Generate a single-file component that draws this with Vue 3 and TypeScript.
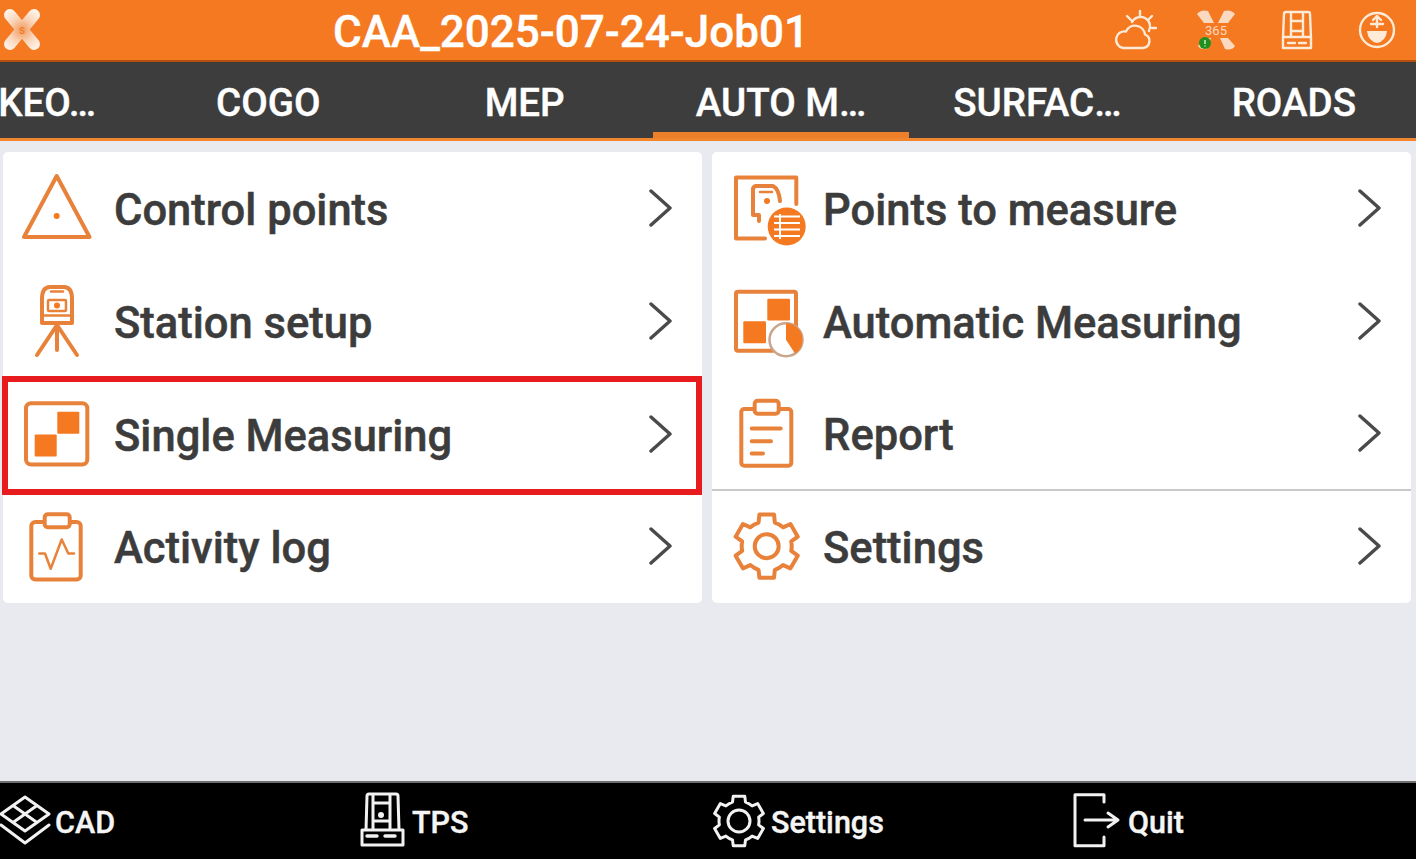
<script setup lang="ts">
const tabs = ['STAKEO…', 'COGO', 'MEP', 'AUTO M…', 'SURFAC…', 'ROADS']
const activeTab = 'AUTO M…'

const leftRows = [
  { label: 'Control points', icon: 'triangle' },
  { label: 'Station setup', icon: 'station' },
  { label: 'Single Measuring', icon: 'single', marked: true },
  { label: 'Activity log', icon: 'activity' },
]

const rightRows = [
  { label: 'Points to measure', icon: 'points' },
  { label: 'Automatic Measuring', icon: 'auto' },
  { label: 'Report', icon: 'report', divided: true },
  { label: 'Settings', icon: 'gear' },
]

const footerItems = [
  { label: 'CAD', icon: 'cad', width: 55 },
  { label: 'TPS', icon: 'tps', width: 58 },
  { label: 'Settings', icon: 'gear', width: 63 },
  { label: 'Quit', icon: 'quit', width: 66 },
]

// six teeth, one pointing straight up
function gearPath(cx: number, cy: number, ro: number, ri: number) {
  const pt = (r: number, deg: number) => {
    const a = (deg * Math.PI) / 180
    return `${(cx + r * Math.cos(a)).toFixed(2)} ${(cy + r * Math.sin(a)).toFixed(2)}`
  }
  let d = ''
  for (let i = 0; i < 6; i++) {
    const c = -90 + i * 60
    d += `${i === 0 ? 'M' : `A${ri} ${ri} 0 0 1`}${pt(ri, c - 19)} L${pt(ro, c - 13)} L${pt(ro, c + 13)} L${pt(ri, c + 19)} `
  }
  return d + `A${ri} ${ri} 0 0 1 ${pt(ri, -109)} Z`
}
</script>

<template>
  <div class="app">
    <header class="title-bar">
      <svg class="logo" width="46" height="60" viewBox="0 0 46 60">
        <defs>
          <radialGradient id="petal" gradientUnits="userSpaceOnUse" cx="22" cy="30" r="24">
            <stop offset="0" stop-color="#f09a5e" />
            <stop offset="0.55" stop-color="#fbd7bd" />
            <stop offset="1" stop-color="#fff4ea" />
          </radialGradient>
        </defs>
        <path class="petals" d="M10 15 L34 44 M34 15 L10 44" />
        <text x="22" y="34" class="logo-s">s</text>
      </svg>
      <h1 class="job-title">CAA_2025-07-24-Job01</h1>
      <div class="status-icons">
        <svg width="80" height="60" viewBox="0 0 80 60" class="status-line">
          <path d="M27 48 H47 A7 7 0 0 0 49 34.5 A10 10 0 0 0 30 31.5 A8.2 8.2 0 0 0 27 48 Z" />
          <path d="M36 22 A9.5 9.5 0 0 1 53 31 M44 11 V17 M31 16 L35 20 M56 16 L52 20 M56 28 H60" />
        </svg>
        <svg width="80" height="60" viewBox="0 0 80 60">
          <path class="x-petal" d="M21 14 Q25 9 32 11 L38 23 H28 Z M59 14 Q55 9 48 11 L42 23 H52 Z M59 46 Q56 51 49 49 L44 38 H52 Z M28 38 H35 L31 49 Q25 50 22 46 Z" />
          <text x="40" y="35" class="x-number">365</text>
          <circle cx="29" cy="43" r="6" fill="#1f8f1f" />
          <path d="M29 40 V44 M29 45.5 V46.5" stroke="#d8f3d0" stroke-width="1.4" />
        </svg>
        <svg width="80" height="60" viewBox="0 0 80 60" class="status-line">
          <path d="M27 48 V38 L28 14 Q28 12 30 12 H52 Q54 12 54 14 L55 38 V48 Z M27 37 H55" />
          <path d="M35 13 V37 M47 13 V37 M35 21 H47 M35 31 H47" />
          <path d="M32 43 H39 M43 43 H50" />
        </svg>
        <svg width="80" height="60" viewBox="0 0 80 60" class="status-line">
          <circle cx="41" cy="30" r="17" />
          <path d="M41 17 V27 M37 20 L41 16 L45 20 M35 24 H47" />
          <path class="status-fill" d="M31 31 H51 Q50 41 41 43 Q32 41 31 31 Z" />
        </svg>
      </div>
    </header>

    <nav class="tab-bar">
      <div class="tab-strip">
        <div v-for="tab in tabs" :key="tab" class="tab" :class="{ active: tab === activeTab }">{{ tab }}</div>
      </div>
    </nav>

    <main class="menu-area">
      <section class="card">
        <div v-for="row in leftRows" :key="row.label" class="row">
          <svg class="row-icon" width="80" height="80" viewBox="0 0 80 80">
            <template v-if="row.icon === 'triangle'">
              <path d="M39.7 7 L72.5 68 H7 Z" />
              <circle class="solid" cx="39.7" cy="47" r="3" />
            </template>
            <template v-else-if="row.icon === 'station'">
              <path d="M25 41 V17 Q25 5 33 5 H47 Q55 5 55 17 V41 Z" fill="#fff" />
              <rect x="31" y="18" width="18" height="11" rx="1" stroke-width="2.5" />
              <circle class="solid" cx="40" cy="23.5" r="3" />
              <path d="M25 33.5 H55 M34 9.5 H46" stroke-width="2.5" />
              <path d="M40 43 L20 73 M40 43 L60 73 M40 43 V68" />
            </template>
            <template v-else-if="row.icon === 'single'">
              <rect x="9" y="8.2" width="61.3" height="61.3" rx="5" />
              <rect class="solid" x="40.3" y="16.8" width="22" height="22" rx="1" />
              <rect class="solid" x="17.7" y="39.5" width="22" height="22" rx="1" />
            </template>
            <template v-else>
              <rect x="14.3" y="15" width="49.4" height="57.5" rx="4" />
              <rect class="clip" x="27.7" y="7.2" width="25" height="13" rx="3" />
              <path d="M22.3 46.5 H28 L33.7 61.8 L44.7 32.5 L51.3 46.5 H57" stroke-width="2.5" />
            </template>
          </svg>
          <span class="row-label">{{ row.label }}</span>
          <svg class="chevron" width="24" height="38" viewBox="0 0 24 38">
            <path d="M2 2 L21 19 L2 36" />
          </svg>
          <div v-if="row.marked" class="red-mark"></div>
        </div>
      </section>

      <section class="card">
        <div v-for="row in rightRows" :key="row.label" class="row" :class="{ divided: row.divided }">
          <svg class="row-icon" width="80" height="80" viewBox="0 0 80 80">
            <template v-if="row.icon === 'points'">
              <path d="M70.3 35 V8.5 H10 V69.5 H39" />
              <path d="M27 46 V20 Q27 18 30 17 H47 Q53 20 54 32 M27 46 H33 L33 52" />
              <path d="M34 23 H46" stroke-width="2.5" />
              <circle class="solid" cx="41" cy="32" r="3" />
              <circle class="solid" cx="60.7" cy="57.5" r="19" />
              <path class="table-lines" d="M48 47.5 H74 M48 54 H74 M48 60.5 H74 M48 67 H74 M54 45 V70" />
            </template>
            <template v-else-if="row.icon === 'auto'">
              <rect x="10" y="9.8" width="60" height="59" rx="2" />
              <rect class="solid" x="41.3" y="16.8" width="22.7" height="21.7" rx="1" />
              <rect class="solid" x="17.3" y="39.2" width="22.7" height="22" rx="1" />
              <circle class="pie-face" cx="60" cy="57.8" r="16.5" />
              <path class="solid" d="M60 41.3 A16.5 16.5 0 0 1 69 71.6 L60 57.8 Z" />
            </template>
            <template v-else-if="row.icon === 'report'">
              <rect x="15.3" y="15" width="50" height="56.8" rx="3" />
              <rect class="clip" x="28.7" y="6.8" width="24" height="13" rx="3" />
              <path d="M25.7 34.5 H54.7 M25.7 47.2 H45 M25.7 59.5 H37" />
            </template>
            <template v-else>
              <path :d="gearPath(40.7, 39.2, 32.5, 25)" />
              <circle cx="40.7" cy="39.2" r="12" />
            </template>
          </svg>
          <span class="row-label">{{ row.label }}</span>
          <svg class="chevron" width="24" height="38" viewBox="0 0 24 38">
            <path d="M2 2 L21 19 L2 36" />
          </svg>
        </div>
      </section>
    </main>

    <footer class="bottom-bar">
      <div v-for="item in footerItems" :key="item.label" class="bottom-item">
        <svg class="bottom-icon" :width="item.width" height="62" :viewBox="`0 0 ${item.width} 62`">
          <template v-if="item.icon === 'cad'">
            <path d="M25 7 L49 24 L25 41 L1 24 Z M13 15.5 L37 32.5 M37 15.5 L13 32.5" />
            <path d="M1 35 L25 53 L49 35" />
          </template>
          <template v-else-if="item.icon === 'tps'">
            <path d="M8 55 V40 H49 V55 Z M12 40 L13 6 Q13 4 15 4 H42 Q44 4 44 6 L45 40" />
            <path d="M19 5 V39 M36 5 V39 M19 13 H36 M19 31 H36" />
            <circle class="solid" cx="27" cy="25" r="3" />
            <path d="M13 46 H23 M31 46 H41" stroke-width="3.4" />
          </template>
          <template v-else-if="item.icon === 'gear'">
            <path :d="gearPath(31, 31, 25.5, 20)" />
            <circle cx="31" cy="31" r="11" />
          </template>
          <template v-else>
            <path d="M42 12 V4.7 H13 V55.7 H42 V47" />
            <path d="M23 30 H56 M46 23 L56 30 L46 37" />
          </template>
        </svg>
        <span class="bottom-label">{{ item.label }}</span>
      </div>
    </footer>
  </div>
</template>

<style scoped>
.app {
  display: flex;
  flex-direction: column;
  height: 100vh;
  overflow: hidden;
  background: #e9eaef;
  font-family: Roboto, "Liberation Sans", sans-serif;
}

.title-bar {
  display: flex;
  align-items: center;
  height: 60px;
  background: #f47920;
  border-bottom: 2px solid #b5500c;
  flex-shrink: 0;
}

.petals {
  fill: none;
  stroke: url(#petal);
  stroke-width: 12;
  stroke-linecap: round;
}

.logo-s {
  font-size: 12px;
  fill: #f47920;
  text-anchor: middle;
}

.job-title {
  flex: 1;
  margin: 0;
  padding-top: 3px;
  color: #fff;
  font-size: 44px;
  font-weight: 500;
  line-height: 1;
  text-align: center;
  -webkit-text-stroke: 0.4px #fff;
}

.status-icons {
  display: flex;
  width: 320px;
}

.status-line {
  fill: none;
  stroke: #fdebd8;
  stroke-width: 2.4;
  stroke-linecap: round;
  stroke-linejoin: round;
}

.status-fill {
  fill: #fdebd8;
  stroke: none;
}

.x-petal {
  fill: #fbd9c0;
}

.x-number {
  font-size: 13px;
  fill: #fbd9c0;
  text-anchor: middle;
}

.tab-bar {
  height: 79px;
  background: #3d3d3d;
  border-bottom: 3px solid #f2862f;
  box-sizing: border-box;
  overflow: hidden;
  flex-shrink: 0;
}

.tab-strip {
  display: flex;
  justify-content: flex-end;
  height: 100%;
  margin-right: -6px;
}

.tab {
  flex: 0 0 256.4px;
  box-sizing: border-box;
  display: flex;
  align-items: center;
  justify-content: center;
  padding-top: 4px;
  color: #fff;
  font-size: 38.5px;
  font-weight: 500;
  white-space: nowrap;
  -webkit-text-stroke: 0.4px #fff;
}

.tab.active {
  border-bottom: 6px solid #ee7f2a;
  padding-top: 10px;
}

.menu-area {
  flex: 1;
  display: grid;
  grid-template-columns: 699px 699px;
  column-gap: 10px;
  align-items: start;
  padding: 11px 5px 0 3px;
}

.card {
  background: #fff;
  border-radius: 5px;
}

.row {
  position: relative;
  display: flex;
  align-items: center;
  height: 113px;
  padding: 0 29px 0 14px;
  box-sizing: border-box;
}

.row:last-child {
  height: 112px;
}

.row.divided {
  border-bottom: 2px solid #c9c9c9;
}

.row-icon {
  margin-right: 16px;
  flex-shrink: 0;
  fill: none;
  stroke: #e8823a;
  stroke-width: 4;
  stroke-linejoin: round;
  stroke-linecap: round;
}

.row-icon .solid {
  fill: #f47920;
  stroke: none;
}

.row-icon .clip {
  fill: #fff;
}

.row-icon .pie-face {
  fill: #fff;
  stroke: #c9a58c;
  stroke-width: 2.5;
}

.row-icon .table-lines {
  stroke: #fff;
  stroke-width: 2;
  stroke-linecap: butt;
}

.row-label {
  flex: 1;
  padding-top: 4px;
  padding-left: 1px;
  color: #3c3c3c;
  font-size: 43.5px;
  font-weight: 500;
  line-height: 1;
  white-space: nowrap;
  -webkit-text-stroke: 0.5px #3c3c3c;
}

.chevron {
  margin-bottom: 2px;
  fill: none;
  stroke: #4a4a4a;
  stroke-width: 3.4;
  stroke-linecap: round;
  stroke-linejoin: round;
}

.red-mark {
  position: absolute;
  top: -2px;
  bottom: -4px;
  left: -1px;
  right: 0;
  border: 6px solid #e81c1f;
}

.bottom-bar {
  display: grid;
  grid-template-columns: repeat(4, 354px);
  align-items: center;
  height: 78px;
  background: #000;
  border-top: 2px solid #6f6f6f;
  box-sizing: border-box;
  flex-shrink: 0;
}

.bottom-item {
  display: flex;
  align-items: center;
}

.bottom-icon {
  flex-shrink: 0;
  fill: none;
  stroke: #f2f2f2;
  stroke-width: 3;
  stroke-linejoin: round;
  stroke-linecap: round;
}

.bottom-icon .solid {
  fill: #f2f2f2;
  stroke: none;
}

.bottom-label {
  padding-top: 2px;
  color: #f5f5f5;
  font-size: 30.5px;
  font-weight: 500;
  -webkit-text-stroke: 0.4px #f5f5f5;
}
</style>
